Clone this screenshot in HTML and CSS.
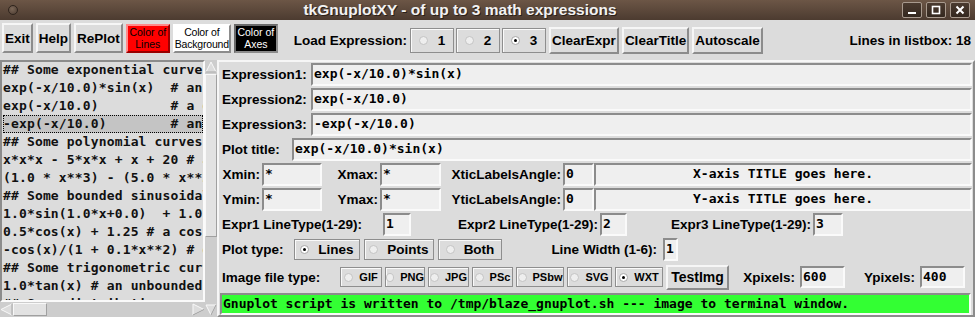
FILE: index.html
```html
<!DOCTYPE html>
<html lang="en">
<head>
  <meta charset="UTF-8">
  <title>tkGnuplotXY - of up to 3 math expressions</title>
  <link rel="stylesheet" href="styles.css">
</head>
<body>
  <div class="titlebar">
    <span class="wm-dot"></span>
    <span class="wm-title">tkGnuplotXY - of up to 3 math expressions</span>
    <div class="wm-buttons">
      <span class="wm-btn"><svg width="10" height="10" viewBox="0 0 10 10"><rect x="1" y="7" width="8" height="2" fill="#fff"/></svg></span>
      <span class="wm-btn"><svg width="10" height="10" viewBox="0 0 10 10"><rect x="1.5" y="1.5" width="7" height="7" fill="none" stroke="#fff" stroke-width="1.6"/></svg></span>
      <span class="wm-btn"><svg width="10" height="10" viewBox="0 0 10 10"><path d="M1.5 1.5 L8.5 8.5 M8.5 1.5 L1.5 8.5" stroke="#fff" stroke-width="2"/></svg></span>
    </div>
  </div>

  <div class="toolbar">
    <button class="btn">Exit</button>
    <button class="btn">Help</button>
    <button class="btn">RePlot</button>
    <button class="btn color c-lines">Color of<br>Lines</button>
    <button class="btn color c-bg">Color of<br>Background</button>
    <button class="btn color c-axes">Color of<br>Axes</button>
    <span class="tb-label">Load Expression:</span>
    <div class="tb-radios">
      <span class="radio tb-radio"><span class="dot"></span>1</span>
      <span class="radio tb-radio"><span class="dot"></span>2</span>
      <span class="radio tb-radio"><span class="dot on"></span>3</span>
    </div>
    <button class="btn tall">ClearExpr</button>
    <button class="btn tall">ClearTitle</button>
    <button class="btn tall">Autoscale</button>
    <span class="count">Lines in listbox: 18</span>
  </div>

  <div class="main">
    <div class="listpane">
      <div class="listbox">
        <div class="line">## Some exponential curves</div>
        <div class="line">exp(-x/10.0)*sin(x)  # an </div>
        <div class="line">exp(-x/10.0)         # a d</div>
        <div class="line sel">-exp(-x/10.0)        # an </div>
        <div class="line">## Some polynomial curves:</div>
        <div class="line">x*x*x - 5*x*x + x + 20 # a</div>
        <div class="line">(1.0 * x**3) - (5.0 * x**2</div>
        <div class="line">## Some bounded sinusoidal</div>
        <div class="line">1.0*sin(1.0*x+0.0)  + 1.0*</div>
        <div class="line">0.5*cos(x) + 1.25 # a cosi</div>
        <div class="line">-cos(x)/(1 + 0.1*x**2) # d</div>
        <div class="line">## Some trigonometric curv</div>
        <div class="line">1.0*tan(x) # an unbounded </div>
        <div class="line">## Some distributions:</div>
      </div>
      <div class="vscroll">
        <svg class="arrow" width="12" height="14" viewBox="0 0 12 14"><polygon points="6,2 11,12 1,12" fill="#dcdcdc" stroke="#f8f8f8"/><polyline points="11,12 1,12" fill="none" stroke="#9a9a9a"/></svg>
        <div class="vthumb"></div>
        <div class="trough"></div>
        <svg class="arrow" width="12" height="14" viewBox="0 0 12 14"><polygon points="1,2 11,2 6,12" fill="#dcdcdc" stroke="#f8f8f8"/><polyline points="11,2 6,12" fill="none" stroke="#9a9a9a"/></svg>
      </div>
      <div class="hscroll">
        <svg class="arrow" width="13" height="13" viewBox="0 0 13 13"><polygon points="1,6.5 12,1 12,12" fill="#dcdcdc" stroke="#f8f8f8"/><polyline points="12,1 12,12" fill="none" stroke="#9a9a9a"/></svg>
        <div class="hthumb"></div>
        <div class="trough"></div>
        <svg class="arrow" width="13" height="13" viewBox="0 0 13 13"><polygon points="1,1 12,6.5 1,12" fill="#dcdcdc" stroke="#f8f8f8"/><polyline points="12,6.5 1,12" fill="none" stroke="#9a9a9a"/></svg>
      </div>
    </div>

    <div class="form">
      <div class="row row-expr">
        <span class="lbl">Expression1:</span>
        <div class="entry">exp(-x/10.0)*sin(x)</div>
      </div>
      <div class="row row-expr">
        <span class="lbl">Expression2:</span>
        <div class="entry">exp(-x/10.0)</div>
      </div>
      <div class="row row-expr">
        <span class="lbl">Expression3:</span>
        <div class="entry">-exp(-x/10.0)</div>
      </div>
      <div class="row row-title">
        <span class="lbl">Plot title:</span>
        <div class="entry">exp(-x/10.0)*sin(x)</div>
      </div>
      <div class="row row-range">
        <span class="lbl r">Xmin:</span>
        <div class="entry">*</div>
        <span class="lbl r">Xmax:</span>
        <div class="entry">*</div>
        <span class="lbl r">XticLabelsAngle:</span>
        <div class="entry">0</div>
        <div class="entry center">X-axis TITLE goes here.</div>
      </div>
      <div class="row row-range">
        <span class="lbl r">Ymin:</span>
        <div class="entry">*</div>
        <span class="lbl r">Ymax:</span>
        <div class="entry">*</div>
        <span class="lbl r">YticLabelsAngle:</span>
        <div class="entry">0</div>
        <div class="entry center">Y-axis TITLE goes here.</div>
      </div>
      <div class="row row-ltype">
        <span class="lbl">Expr1 LineType(1-29):</span>
        <div class="entry">1</div>
        <span class="lbl r">Expr2 LineType(1-29):</span>
        <div class="entry">2</div>
        <span class="lbl r">Expr3 LineType(1-29):</span>
        <div class="entry">3</div>
      </div>
      <div class="row row-plot">
        <span class="lbl">Plot type:</span>
        <span class="radio"><span class="dot on"></span>Lines</span>
        <span class="radio"><span class="dot"></span>Points</span>
        <span class="radio"><span class="dot"></span>Both</span>
        <span class="lbl r">Line Width (1-6):</span>
        <div class="entry">1</div>
      </div>
      <div class="row row-img">
        <span class="lbl">Image file type:</span>
        <span class="radio small"><span class="dot"></span>GIF</span>
        <span class="radio small"><span class="dot"></span>PNG</span>
        <span class="radio small"><span class="dot"></span>JPG</span>
        <span class="radio small"><span class="dot"></span>PSc</span>
        <span class="radio small"><span class="dot"></span>PSbw</span>
        <span class="radio small"><span class="dot"></span>SVG</span>
        <span class="radio small"><span class="dot on"></span>WXT</span>
        <button class="btn test">TestImg</button>
        <span class="lbl r">Xpixels:</span>
        <div class="entry">600</div>
        <span class="lbl r">Ypixels:</span>
        <div class="entry">400</div>
      </div>
      <div class="status">Gnuplot script is written to /tmp/blaze_gnuplot.sh --- image to terminal window.</div>
    </div>
  </div>
</body>
</html>
```

FILE: styles.css
```css
* { margin: 0; padding: 0; box-sizing: border-box; }
html, body {
  width: 975px;
  height: 317px;
  overflow: hidden;
  background: #dcdcdc;
}
body {
  font-family: "Liberation Sans", Arial, sans-serif;
  font-weight: bold;
  font-size: 13.5px;
  color: #000;
}

/* window manager title bar */
.titlebar {
  height: 20px;
  display: flex;
  align-items: center;
  background: linear-gradient(#6c5646, #4c3b30);
}
.wm-dot {
  width: 10px;
  height: 10px;
  margin-left: 8px;
  border-radius: 50%;
  border: 1px solid #2e231c;
  background: radial-gradient(circle at 40% 35%, #7c6858, #4a3a30);
}
.wm-title {
  flex: 1;
  text-align: center;
  color: #f2f2f2;
  font-size: 15.5px;
  text-shadow: 1px 1px 0 #2a1f18;
}
.wm-buttons {
  display: flex;
  gap: 4px;
  margin-right: 5px;
}
.wm-btn {
  width: 20px;
  height: 16px;
  border: 1px solid #a89a8e;
  border-radius: 2px;
  background: linear-gradient(#4a3a2f, #34281f);
  display: flex;
  align-items: center;
  justify-content: center;
}

/* tool bar */
.toolbar {
  height: 40px;
  display: flex;
  align-items: center;
  gap: 3px;
  padding: 0 3px 0 2px;
}
.btn {
  font-family: inherit;
  font-weight: bold;
  font-size: 13.5px;
  height: 30px;
  padding: 0 1px;
  background: #dcdcdc;
  color: #000;
  border: 2px solid;
  border-color: #f6f6f6 #8c8c8c #8c8c8c #f6f6f6;
  margin-top: -4px;
}
.btn.tall { height: 27px; margin-top: 1px; }
.color {
  width: 44px;
  height: 29px;
  font-weight: normal;
  font-size: 10.5px;
  line-height: 12px;
  padding: 0;
}
.c-lines { background: #ff0000; border-color: #ff8a8a #9a0000 #9a0000 #ff8a8a; }
.c-bg { width: 58px; background: #fff; border-color: #fff #8c8c8c #8c8c8c #fff; letter-spacing: -0.2px; }
.c-axes { background: #000; color: #fff; border-color: #6a6a6a #8c8c8c #8c8c8c #6a6a6a; }
.tb-label { margin-left: 13px; }
.tb-radios { display: flex; gap: 2px; }
.count { margin-left: auto; margin-right: 1px; }

.radio {
  display: flex;
  align-items: center;
  justify-content: center;
  gap: 9px;
  border: 1px solid #8e8e8e;
  box-shadow: inset 1px 1px 0 #fafafa;
  height: 21px;
}
.tb-radio {
  width: 44px;
  height: 25px;
  gap: 10px;
  margin-top: 1px;
}
.dot {
  width: 9px;
  height: 9px;
  border-radius: 50%;
  border: 1px solid #c4c4c4;
  background: #eeeeee;
  position: relative;
}
.dot.on { background: #fff; border-color: #a8a8a8; }
.dot.on::after {
  content: "";
  position: absolute;
  left: 2px;
  top: 2px;
  width: 3px;
  height: 3px;
  border-radius: 50%;
  background: #000;
}

/* main area */
.main {
  display: flex;
  height: 257px;
}
.listpane {
  width: 217px;
  display: grid;
  grid-template-columns: 205px 12px;
  grid-template-rows: 1fr 15px;
}
.listbox {
  border: 2px solid;
  border-color: #8c8c8c #fafafa #fafafa #8c8c8c;
  overflow: hidden;
  font-family: "DejaVu Sans Mono", monospace;
  font-weight: bold;
  font-size: 13px;
  letter-spacing: 0.15px;
  line-height: 18px;
  color: #111;
  padding-left: 1px;
}
.line { white-space: pre; height: 18px; }
.line:first-child { margin-top: -1px; }
.line.sel {
  background: #c4c4c4;
  outline: 1px dotted #000;
  outline-offset: -1px;
}
.vscroll {
  grid-row: 1 / span 2;
  grid-column: 2;
  display: flex;
  flex-direction: column;
  background: #cdcdcd;
}
.vthumb {
  height: 163px;
  background: #e2e2e2;
  border: 1px solid;
  border-color: #f8f8f8 #a0a0a0 #a0a0a0 #f8f8f8;
}
.trough { flex: 1; }
.hscroll {
  display: flex;
  align-items: center;
  background: #cdcdcd;
}
.hthumb {
  width: 34px;
  height: 13px;
  background: #e2e2e2;
  border: 1px solid;
  border-color: #f8f8f8 #a0a0a0 #a0a0a0 #f8f8f8;
}
.arrow { flex: none; display: block; }

/* form panel */
.form {
  flex: 1;
  border: 2px solid;
  border-color: #f6f6f6 #8c8c8c #8c8c8c #f6f6f6;
  padding: 1px 1px 0 0;
  display: flex;
  flex-direction: column;
  gap: 2px;
}
.row {
  height: 23px;
  display: grid;
  align-items: center;
}
.row-expr { grid-template-columns: 92px 1fr; }
.row-title { grid-template-columns: 73px 1fr; }
.row-range { grid-template-columns: 43px 60px 58px 61px 122px 31px 1fr; }
.row-ltype { grid-template-columns: 164px 28px 189px 27px 186px 30px 1fr; }
.row-plot {
  grid-template-columns: 71px 66px 70px 64px 153px 15px 1fr;
  column-gap: 4px;
}
.row-img {
  height: 28px;
  grid-template-columns: 118px 42px 40px 41px 41px 48px 45px 48px 63px 65px 45px 69px 45px;
  column-gap: 3px;
}
.lbl {
  padding-left: 3px;
  white-space: nowrap;
  font-size: 13.5px;
}
.lbl.r { text-align: right; padding: 0 2px 0 0; }
.entry {
  height: 23px;
  background: #efefef;
  border: 2px solid;
  border-color: #8c8c8c #fafafa #fafafa #8c8c8c;
  font-family: "DejaVu Sans Mono", monospace;
  font-weight: bold;
  font-size: 13px;
  line-height: 18px;
  padding: 0 1px;
  white-space: pre;
  overflow: hidden;
}
.entry.center { text-align: center; }
.row-plot .radio { height: 21px; }
.radio.small {
  height: 20px;
  gap: 6px;
  font-size: 11px;
}
.row-img .btn {
  height: 25px;
  margin-top: 0;
  font-size: 14px;
}
.row-img .entry { height: 22px; }
.status {
  height: 22px;
  margin: 0 1px 0 1px;
  background: #33ff33;
  border: 2px solid;
  border-color: #8c8c8c #fafafa #fafafa #8c8c8c;
  font-family: "DejaVu Sans Mono", monospace;
  font-weight: bold;
  font-size: 13px;
  line-height: 17px;
  padding-left: 1px;
  white-space: pre;
  overflow: hidden;
}
```
